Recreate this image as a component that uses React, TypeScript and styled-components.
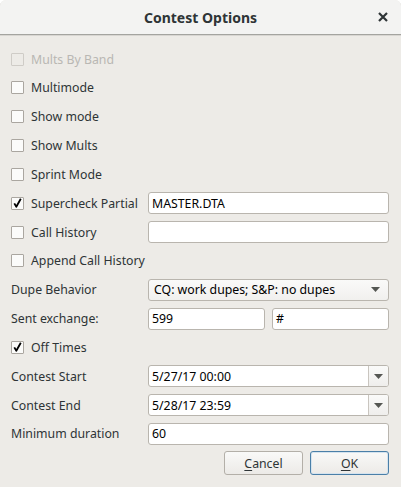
import React from "react";
import styled, { createGlobalStyle } from "styled-components";

const Global = createGlobalStyle`
  html, body { margin: 0; padding: 0; background: #ffffff; }
  body { font-family: "Noto Sans", "DejaVu Sans", sans-serif; }
`;

const Window = styled.div`
  width: 401px;
  height: 487px;
  background: #edebe7;
  display: flex;
  flex-direction: column;
  color: #2e3436;
  font-size: 12.3px;
  overflow: hidden;
  border-radius: 6px 6px 0 0;
`;

const TitleBar = styled.div`
  height: 35px;
  flex: none;
  background: #f3f3f2;
  border-bottom: 1px solid #a4a4a0;
  box-shadow: 0 1px 0 #d8d6d2;
  display: grid;
  grid-template-columns: 1fr auto 1fr;
  align-items: center;
  box-sizing: border-box;
`;

const Title = styled.div`
  font-weight: bold;
  font-size: 14px;
  color: #2e3436;
`;

const Close = styled.div`
  justify-self: end;
  margin-right: 12px;
  width: 12px;
  height: 12px;
  display: flex;
  align-items: center;
  justify-content: center;
`;

const Body = styled.div`
  padding: 9.6px 12px 0 11px;
  display: flex;
  flex-direction: column;
`;

const Row = styled.div`
  height: 28.85px;
  display: grid;
  grid-template-columns: 137px 1fr;
  align-items: center;
`;

const CheckLabel = styled.label<{ $disabled?: boolean }>`
  display: flex;
  align-items: center;
  gap: 7px;
  white-space: nowrap;
  color: ${(p) => (p.$disabled ? "#b9b7b3" : "#2e3436")};
`;

const Box = styled.span<{ $disabled?: boolean }>`
  width: 13px;
  height: 13px;
  box-sizing: border-box;
  border: 1px solid ${(p) => (p.$disabled ? "#cfccc7" : "#aaa6a0")};
  background: ${(p) => (p.$disabled ? "#edebe7" : "#fbfbfa")};
  border-radius: 1px;
  display: flex;
  align-items: center;
  justify-content: center;
  flex: none;
`;

const Label = styled.span`
  white-space: nowrap;
`;

const Input = styled.div`
  height: 22px;
  box-sizing: border-box;
  border: 1px solid #b9b5ae;
  border-radius: 3px;
  background: #ffffff;
  display: flex;
  align-items: center;
  padding-left: 3px;
  color: #000;
`;

const Pair = styled.div`
  display: grid;
  grid-template-columns: 1fr 1fr;
  gap: 7px;
`;

const Combo = styled.div`
  height: 22px;
  box-sizing: border-box;
  border: 1px solid #b9b5ae;
  border-radius: 3px;
  background: linear-gradient(#fafaf9, #f1f0ee);
  display: flex;
  align-items: center;
  justify-content: space-between;
  padding: 0 8px 0 5px;
  color: #000;
`;

const EditCombo = styled.div`
  height: 22px;
  box-sizing: border-box;
  border: 1px solid #b9b5ae;
  border-radius: 3px;
  background: #ffffff;
  display: grid;
  grid-template-columns: 1fr 20px;
  color: #000;
`;

const EditText = styled.div`
  display: flex;
  align-items: center;
  padding-left: 3px;
`;

const ArrowCell = styled.div`
  border-left: 1px solid #c9c5bf;
  background: linear-gradient(#fafaf9, #efeeec);
  border-radius: 0 2px 2px 0;
  display: flex;
  align-items: center;
  justify-content: center;
`;

const Buttons = styled.div`
  display: flex;
  justify-content: flex-end;
  gap: 7px;
  margin-top: 2.6px;
`;

const Button = styled.button<{ $default?: boolean }>`
  width: 79px;
  height: 24px;
  box-sizing: border-box;
  border: 1px solid ${(p) => (p.$default ? "#4a7fa8" : "#b3afa8")};
  border-radius: 3px;
  background: linear-gradient(#f9f9f8, #eceae7);
  font-family: inherit;
  font-size: 12.3px;
  color: #2e3436;
  padding: 0;
  box-shadow: ${(p) => (p.$default ? "inset 0 0 0 1px #d5e3ee" : "none")};
  u { text-decoration: underline; text-underline-offset: 2px; }
`;

const Arrow = () => (
  <svg width="9" height="5" viewBox="0 0 9 5">
    <path d="M0 0 H9 L4.5 5 Z" fill="#555753" />
  </svg>
);

const Tick = () => (
  <svg width="9" height="10" viewBox="0 0 9 10">
    <path d="M1.3 5.4 L3.3 8.8 L7.8 0.8" stroke="#000" strokeWidth="1.8" fill="none" strokeLinejoin="round" />
  </svg>
);

const Check: React.FC<{ label: string; checked?: boolean; disabled?: boolean }> = ({ label, checked, disabled }) => (
  <CheckLabel $disabled={disabled}>
    <Box $disabled={disabled}>{checked && <Tick />}</Box>
    {label}
  </CheckLabel>
);

export default function App() {
  return (
    <Window>
      <Global />
      <TitleBar>
        <span />
        <Title>Contest Options</Title>
        <Close>
          <svg width="10" height="10" viewBox="0 0 10 10">
            <path d="M1 1 L9 9 M9 1 L1 9" stroke="#2e3436" strokeWidth="2.2" />
          </svg>
        </Close>
      </TitleBar>
      <Body>
        <Row><Check label="Mults By Band" disabled /></Row>
        <Row><Check label="Multimode" /></Row>
        <Row><Check label="Show mode" /></Row>
        <Row><Check label="Show Mults" /></Row>
        <Row><Check label="Sprint Mode" /></Row>
        <Row><Check label="Supercheck Partial" checked /><Input>MASTER.DTA</Input></Row>
        <Row><Check label="Call History" /><Input /></Row>
        <Row><Check label="Append Call History" /></Row>
        <Row>
          <Label>Dupe Behavior</Label>
          <Combo>CQ: work dupes; S&amp;P: no dupes<Arrow /></Combo>
        </Row>
        <Row>
          <Label>Sent exchange:</Label>
          <Pair><Input>599</Input><Input>#</Input></Pair>
        </Row>
        <Row><Check label="Off Times" checked /></Row>
        <Row>
          <Label>Contest Start</Label>
          <EditCombo><EditText>5/27/17 00:00</EditText><ArrowCell><Arrow /></ArrowCell></EditCombo>
        </Row>
        <Row>
          <Label>Contest End</Label>
          <EditCombo><EditText>5/28/17 23:59</EditText><ArrowCell><Arrow /></ArrowCell></EditCombo>
        </Row>
        <Row>
          <Label>Minimum duration</Label>
          <Input>60</Input>
        </Row>
        <Buttons>
          <Button><u>C</u>ancel</Button>
          <Button $default><u>O</u>K</Button>
        </Buttons>
      </Body>
    </Window>
  );
}
